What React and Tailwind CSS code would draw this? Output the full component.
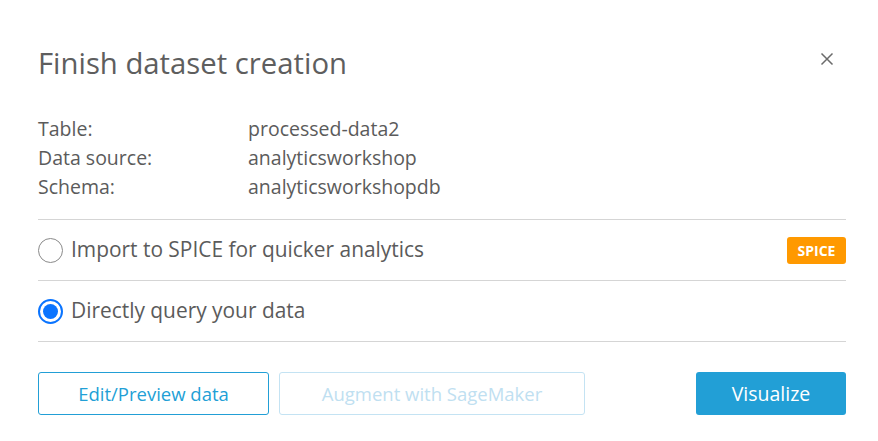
export default function App() {
  const font = { fontFamily: '"Open Sans", "Noto Sans", sans-serif' };
  return (
    <div className="w-[878px] h-[441px] bg-white relative" style={font}>
      <div className="pl-[38px] pr-[32px] pt-[45px] text-[#5b5b5b]">
        <div className="flex items-center justify-between h-[36px]">
          <h1 className="text-[29.3px] leading-[36px] font-normal text-[#5e5e5e]">Finish dataset creation</h1>
          <button type="button" aria-label="Close" className="mr-[12px] -mt-[8px] text-[#6b6b6b]">
            <svg width="14" height="14" viewBox="0 0 14 14" fill="none" stroke="currentColor" strokeWidth="1.5">
              <path d="M1.5 1.5L12.5 12.5M12.5 1.5L1.5 12.5" />
            </svg>
          </button>
        </div>

        <div className="mt-[33px] text-[19.5px] leading-[29px]">
          <div className="flex"><span className="w-[210px]">Table:</span><span>processed-data2</span></div>
          <div className="flex"><span className="w-[210px]">Data source:</span><span>analyticsworkshop</span></div>
          <div className="flex"><span className="w-[210px]">Schema:</span><span>analyticsworkshopdb</span></div>
        </div>

        <div className="mt-[18px] border-t border-[#d5d5d5]">
          <label className="flex items-center h-[61px] border-b border-[#d5d5d5] text-[20.9px]">
            <span className="w-[25px] h-[25px] rounded-full border border-[#8a8a8a] bg-white shrink-0" />
            <span className="ml-[8px] text-[#5b5b5b]">Import to SPICE for quicker analytics</span>
            <span className="ml-auto h-[27px] w-[59px] text-center rounded-[3px] bg-[#ff9900] text-white text-[14px] font-bold leading-[27px]">SPICE</span>
          </label>
          <label className="flex items-center h-[61px] border-b border-[#d5d5d5] text-[20.9px]">
            <span className="w-[25px] h-[25px] rounded-full border-[2px] border-[#0a74ff] bg-white shrink-0 flex items-center justify-center">
              <span className="w-[15px] h-[15px] rounded-full bg-[#0a74ff]" />
            </span>
            <span className="ml-[8px] text-[#5b5b5b]">Directly query your data</span>
          </label>
        </div>

        <div className="mt-[30px] flex items-center">
          <button type="button" className="w-[231px] h-[43px] rounded-[3px] border border-[#229fd6] text-[#229fd6] text-[18.5px] bg-white">
            Edit/Preview data
          </button>
          <button type="button" disabled className="ml-[10px] w-[306px] h-[43px] rounded-[3px] border border-[#c4e3f3] text-[#bfe0f1] text-[18.5px] bg-white">
            Augment with SageMaker
          </button>
          <button type="button" className="ml-auto w-[150px] h-[43px] rounded-[3px] bg-[#229fd6] text-white text-[19.5px]">
            Visualize
          </button>
        </div>
      </div>
    </div>
  );
}
